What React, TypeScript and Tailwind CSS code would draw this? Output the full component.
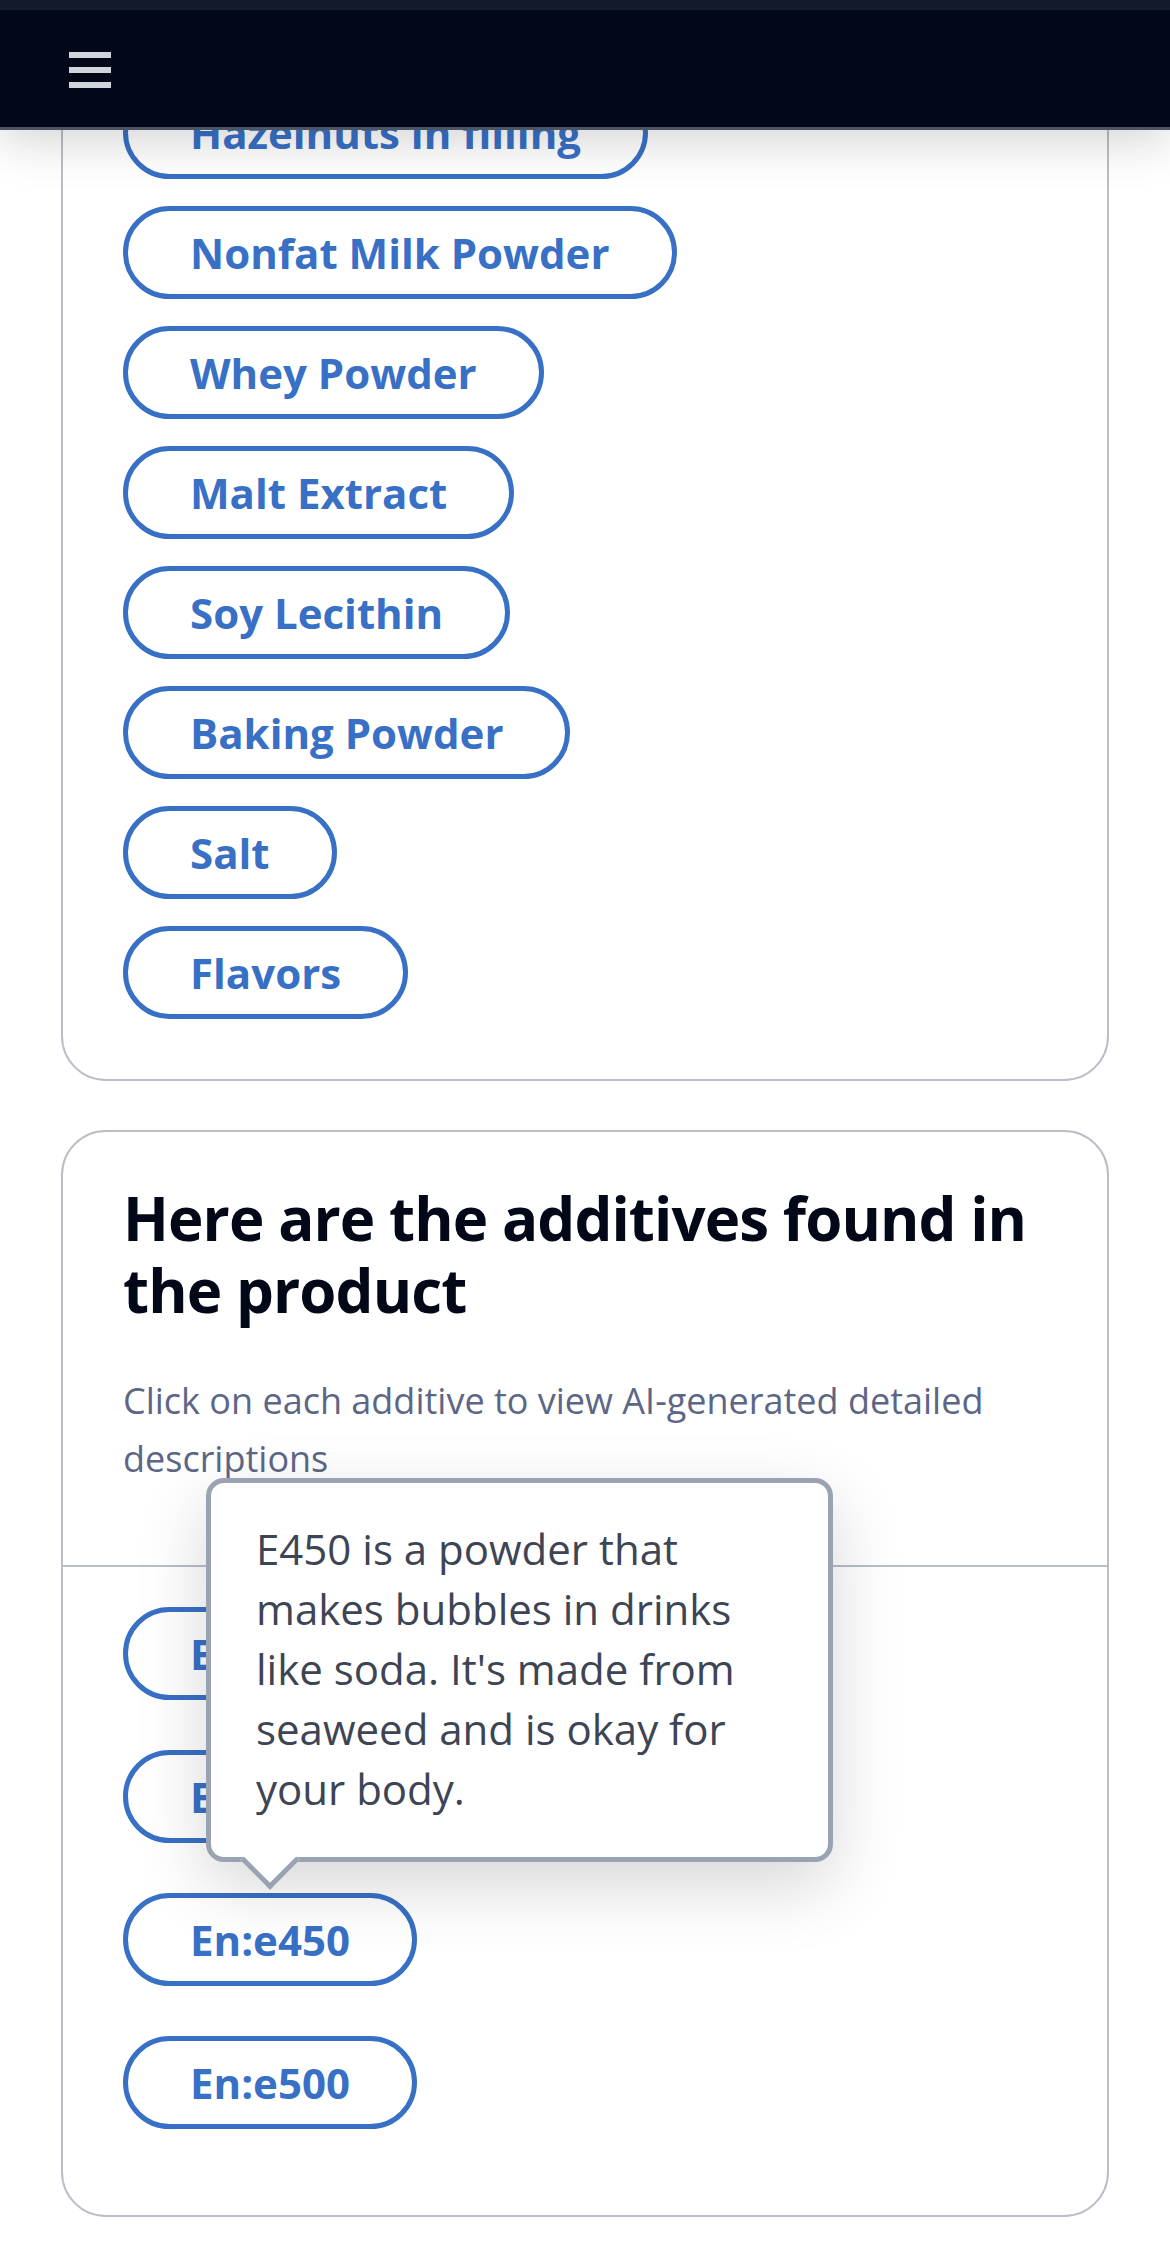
import { FC } from "react";

const ingredients = [
  "Wheat Flour",
  "Sugar",
  "Palm Oil",
  "Hazelnuts in filling",
  "Nonfat Milk Powder",
  "Whey Powder",
  "Malt Extract",
  "Soy Lecithin",
  "Baking Powder",
  "Salt",
  "Flavors",
];

const additives = ["En:e322", "En:e330", "En:e450", "En:e500"];

const Pill: FC<{ label: string }> = ({ label }) => (
  <button className="inline-flex items-center rounded-full border-[5px] border-[#3870c6] bg-white px-[62px] py-[10px] text-[42px] leading-[63px] font-bold text-[#3870c6]">
    {label}
  </button>
);

const Tooltip: FC<{ text: string }> = ({ text }) => (
  <div className="absolute bottom-[calc(100%+31px)] left-[83px] z-20 w-[627px] rounded-[18px] border-[5px] border-[#9aa3b1] bg-white pt-[36px] pb-[38px] pl-[45px] pr-[40px] shadow-[0_24px_70px_rgba(0,0,0,0.16)]">
    <p className="text-[42px] leading-[60px] text-[#3d4554]">{text}</p>
    <span className="absolute left-[38px] bottom-[-24px] h-[42px] w-[42px] rotate-45 border-r-[5px] border-b-[5px] border-[#9aa3b1] bg-white" />
  </div>
);

const App: FC = () => {
  return (
    <div className="min-h-screen bg-white font-['Open_Sans',sans-serif]">
      <header className="fixed inset-x-0 top-0 z-50 h-[130px] border-t-[10px] border-b-[3px] border-t-[#131a2a] border-b-[#4b5563] bg-[#020817] shadow-[0_10px_50px_rgba(0,0,0,0.18)]">
        <button className="ml-[69px] mt-[42px] flex w-[42px] flex-col gap-[9px]">
          <span className="h-[6px] w-full bg-[#d1d5db]" />
          <span className="h-[6px] w-full bg-[#d1d5db]" />
          <span className="h-[6px] w-full bg-[#d1d5db]" />
        </button>
      </header>

      <main className="mt-[-336px] flex flex-col gap-[49px] px-[61px] pb-[25px]">
        <section className="flex flex-col items-start gap-[27px] rounded-[45px] border-2 border-[#b9bec7] bg-white p-[60px]">
          {ingredients.map((item) => (
            <Pill key={item} label={item} />
          ))}
        </section>

        <section className="rounded-[45px] border-2 border-[#b9bec7] bg-white">
          <div className="border-b-2 border-[#b9bec7] pl-[60px] pr-[40px] pt-[50px] pb-[77px]">
            <h2 className="text-[60px] leading-[72px] font-bold tracking-[-0.9px] text-[#020817]">
              Here are the additives found in the product
            </h2>
            <p className="mt-[46px] pr-[20px] text-[36px] leading-[58px] text-[#5d6685]">
              Click on each additive to view AI-generated detailed descriptions
            </p>
          </div>
          <div className="flex flex-col items-start gap-[50px] px-[60px] pt-[40px] pb-[86px]">
            {additives.map((code) => (
              <div key={code} className="relative">
                <Pill label={code} />
                {code === "En:e450" && (
                  <Tooltip text="E450 is a powder that makes bubbles in drinks like soda. It's made from seaweed and is okay for your body." />
                )}
              </div>
            ))}
          </div>
        </section>
      </main>
    </div>
  );
};

export default App;
